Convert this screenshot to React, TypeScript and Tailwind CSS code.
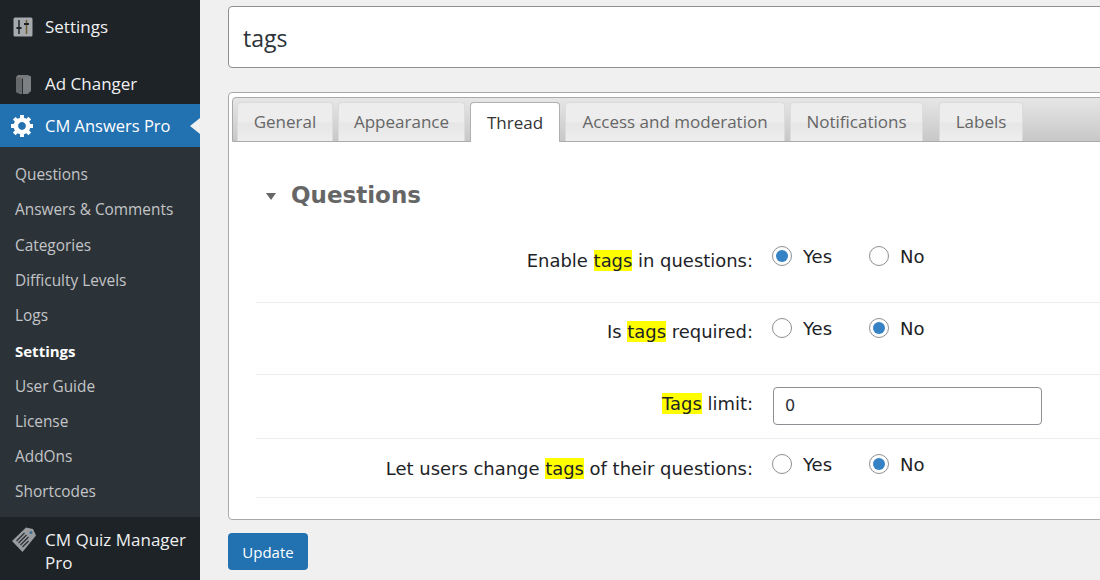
const submenu = ["Questions", "Answers & Comments", "Categories", "Difficulty Levels", "Logs", "Settings", "User Guide", "License", "AddOns", "Shortcodes"];

const tabs = [
  { label: "General", width: "w-[96px]", margin: "" },
  { label: "Appearance", width: "w-[127px]", margin: "ml-[5px]" },
  { label: "Thread", width: "w-[90px]", margin: "ml-[5px]" },
  { label: "Access and moderation", width: "w-[220px]", margin: "ml-[5px]" },
  { label: "Notifications", width: "w-[133px]", margin: "ml-[5px]" },
  { label: "Labels", width: "w-[84px]", margin: "ml-[16px]" },
];

function Mark({ children }: { children: string }) {
  return <span className="bg-[#ffff00]">{children}</span>;
}

function Radio({ checked, label }: { checked: boolean; label: string }) {
  return (
    <span className="flex h-6 w-[97px] items-center">
      <span className="flex h-5 w-5 items-center justify-center rounded-full border border-[#8c8f94] bg-white">
        {checked && <span className="h-3 w-3 rounded-full bg-[#3582c4]" />}
      </span>
      <span className="ml-[11px] pt-[2px] text-[18px] leading-6 text-[#1d2327] [font-family:'DejaVu_Sans',sans-serif]">{label}</span>
    </span>
  );
}

function YesNo({ yes }: { yes: boolean }) {
  return (
    <div className="flex items-center">
      <Radio checked={yes} label="Yes" />
      <Radio checked={!yes} label="No" />
    </div>
  );
}

function Row({ label, height, children, labelPad, controlPad }: { label: React.ReactNode; height: string; children: React.ReactNode; labelPad: string; controlPad: string }) {
  return (
    <div className={`flex w-[900px] border-b border-[#ececec] ${height}`}>
      <div className={`w-[497px] text-right text-[17.95px] leading-6 text-[#1d2327] [font-family:'DejaVu_Sans',sans-serif] ${labelPad}`}>{label}</div>
      <div className={`ml-[19px] ${controlPad}`}>{children}</div>
    </div>
  );
}

export default function App() {
  return (
    <div className="flex h-[580px] w-[1100px] overflow-hidden bg-[#f0f0f0] [font-family:'Open_Sans','Noto_Sans',sans-serif]">
      <aside className="flex h-full w-[200px] shrink-0 flex-col bg-[#1d2327] text-white">
        <div className="flex h-[34px] items-center pl-[13px] pt-[20px] text-[17px] text-[#f0f0f1]">
          <svg viewBox="0 0 20 20" className="h-5 w-5">
            <rect x="0.5" y="0.5" width="19" height="19" rx="1.5" fill="#a7aaad" />
            <path d="M6 3v14" stroke="#1d2327" strokeWidth="1.5" />
            <path d="M13.5 3v14" stroke="#6b5a32" strokeWidth="1.5" />
            <path d="M3.5 11h5M11 7h5" stroke="#1d2327" strokeWidth="1.8" />
          </svg>
          <span className="ml-3">Settings</span>
        </div>
        <div className="mb-[2px] mt-[31px] flex h-[37px] items-center pl-[15px] text-[17px] text-[#f0f0f1]">
          <svg viewBox="0 0 17 20" className="h-5 w-[17px]">
            <path d="M1 3 3 1h10l3 1.5V17l-3 3H5l-4-2z" fill="#77797b" />
            <path d="M1 3l6 1.5V20l-6-2z" fill="#66696b" />
            <path d="M7 4.5 16 2.5V17l-9 3z" fill="#7d8082" />
            <path d="M7.5 4.5V20" stroke="#2a2e31" strokeWidth="1" />
          </svg>
          <span className="ml-[13px]">Ad Changer</span>
        </div>
        <div className="relative flex h-[43px] items-center bg-[#2271b1] pl-[11px] text-[16.5px] text-white">
          <svg viewBox="1 2 17 17" className="h-[22px] w-[22px]" fill="white">
            <path
              fillRule="evenodd"
              d="M18 12h-2.18c-.17.7-.44 1.35-.81 1.93l1.54 1.54-2.1 2.1-1.54-1.54c-.58.36-1.23.63-1.91.79V19H8v-2.18c-.68-.16-1.33-.43-1.91-.79l-1.54 1.54-2.12-2.12 1.54-1.54c-.36-.58-.63-1.23-.79-1.91H1V9.03h2.17c.16-.7.44-1.35.8-1.94L2.43 5.55l2.1-2.1 1.54 1.54c.58-.37 1.24-.64 1.93-.81V2h3v2.18c.68.16 1.33.43 1.91.79l1.54-1.54 2.12 2.12-1.54 1.54c.36.59.64 1.24.8 1.94H18V12zm-8.5 1.5c1.66 0 3-1.34 3-3s-1.34-3-3-3-3 1.34-3 3 1.34 3 3 3z"
            />
          </svg>
          <span className="ml-3 pt-[2px]">CM Answers Pro</span>
          <span className="absolute right-0 top-[14px] border-y-[8px] border-r-[10px] border-y-transparent border-r-[#f0f0f0]" />
        </div>
        <ul className="h-[370px] bg-[#2c3338] pt-[10px] text-[15.4px] text-[#c3c4c7]">
          {submenu.map((item) => (
            <li key={item} className={`flex h-[35.25px] items-center pl-[15px] ${item === "Settings" ? "text-[15px] font-bold text-white" : ""}`}>
              {item}
            </li>
          ))}
        </ul>
        <div className="flex pl-[11px] pt-[10px] text-[17px] leading-[23px] text-[#f0f0f1]">
          <svg viewBox="0 0 26 26" className="h-[26px] w-[26px] shrink-0">
            <path d="M1 14 15 0.5l7 1.5 3 6.5L11.5 25z" fill="#9a9d9f" />
            <path d="M5.5 14l8-8M7.5 16l8-8M9.5 18l8-8M11.5 20l6-6" stroke="#2a2e31" strokeWidth="1.2" />
            <circle cx="20" cy="5.5" r="1.5" fill="#3c6f8f" />
          </svg>
          <span className="ml-2 pt-[1px]">
            CM Quiz Manager
            <br />
            Pro
          </span>
        </div>
      </aside>
      <main className="min-w-0 flex-1 overflow-hidden pl-[28px] pt-[6px]">
        <div className="flex h-[62px] w-[900px] items-center rounded border border-[#8c8f94] bg-white pl-[14px] pt-[2px] text-[23px] text-[#2c3338]">tags</div>
        <section className="mt-[24px] h-[428px] w-[900px] rounded border border-[#a7aaad] bg-white pl-[3px] pt-[4px]">
          <div className="flex h-[45px] items-end rounded-t border border-[#aaaaaa] bg-gradient-to-b from-[#e6e6e6] to-[#c8c8c8] pl-[4px]">
            {tabs.map((tab) => (
              <div
                key={tab.label}
                className={`flex h-[39px] items-center justify-center rounded-t border border-b-0 text-[17px] ${tab.width} ${tab.margin} ${
                  tab.label === "Thread"
                    ? "relative top-px h-[40px] border-[#b0b0b0] bg-white text-[#333333]"
                    : "border-[#dcdcdc] bg-[linear-gradient(#ededed_50%,#e6e6e6_52%,#eeeeee)] text-[#666666]"
                }`}
              >
                {tab.label}
              </div>
            ))}
          </div>
          <h2 className="flex items-center pl-[34px] pt-[37px] text-[23px] font-bold leading-[32px] text-[#666666] [font-family:'DejaVu_Sans',sans-serif]">
            <span className="mt-[3px] h-0 w-0 border-x-[5px] border-t-[7px] border-x-transparent border-t-[#666666]" />
            <span className="ml-[15px]">Questions</span>
          </h2>
          <div className="ml-[24px] mt-[24px]">
            <Row label={<>Enable <Mark>tags</Mark> in questions:</>} height="h-[68px]" labelPad="pt-[14px]" controlPad="pt-[9px]">
              <YesNo yes />
            </Row>
            <Row label={<>Is <Mark>tags</Mark> required:</>} height="h-[72px]" labelPad="pt-[17px]" controlPad="pt-[13px]">
              <YesNo yes={false} />
            </Row>
            <Row label={<><Mark>Tags</Mark> limit:</>} height="h-[64px]" labelPad="pt-[17px]" controlPad="pt-[12px] pl-px">
              <div className="flex h-[38px] w-[269px] items-center rounded border border-[#8c8f94] bg-white pl-[11px] text-[16px] text-[#2c3338] [font-family:'DejaVu_Sans',sans-serif]">0</div>
            </Row>
            <Row label={<>Let users change <Mark>tags</Mark> of their questions:</>} height="h-[59px]" labelPad="pt-[18px]" controlPad="pt-[13px]">
              <YesNo yes={false} />
            </Row>
          </div>
        </section>
        <button className="mt-[13px] h-[37px] w-[80px] rounded bg-[#2271b1] pt-[2px] text-[15px] text-white">Update</button>
      </main>
    </div>
  );
}
